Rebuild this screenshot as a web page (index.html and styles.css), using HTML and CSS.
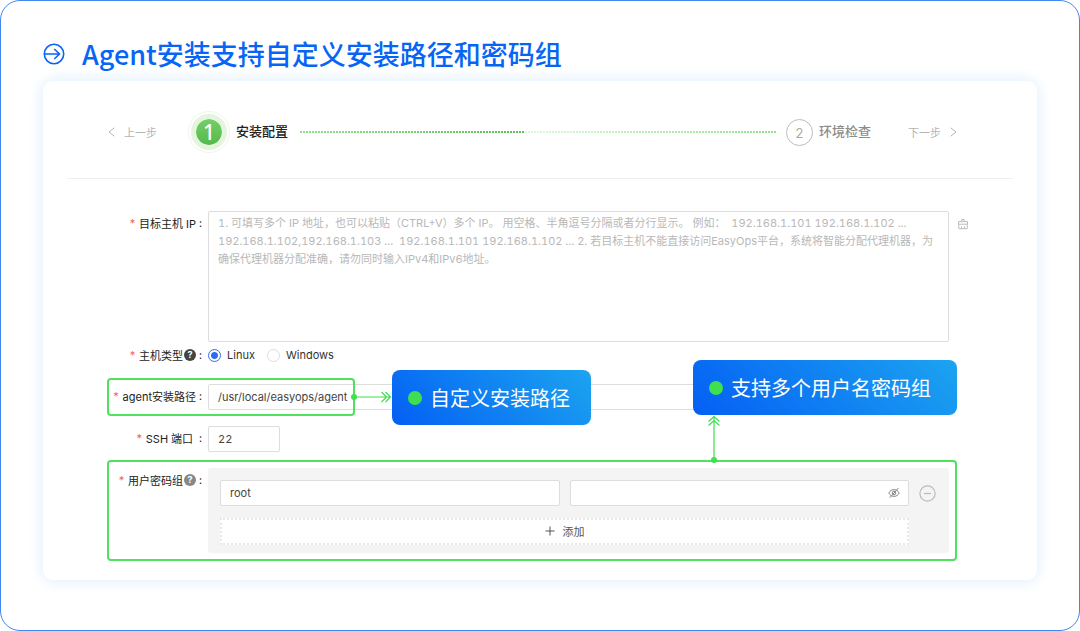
FILE: index.html
```html
<!DOCTYPE html>
<html lang="zh-CN">
<head>
  <meta charset="UTF-8" />
  <meta name="viewport" content="width=device-width, initial-scale=1.0"/>
  <title>Agent安装支持自定义安装路径和密码组</title>
  <link rel="stylesheet" href="styles.css">
</head>
<body>

  <div class="page">
    <header class="page-header">
      <svg class="title-icon" viewBox="0 0 22 22" fill="none" stroke="currentColor" stroke-width="1.6">
        <circle cx="11" cy="11" r="9.7"/>
        <path d="M1 11h15.5M11.3 6l5.2 5-5.2 5"/>
      </svg>
      <h1>Agent安装支持自定义安装路径和密码组</h1>
    </header>

    <main class="card">
      <!-- Steps -->
      <nav class="steps">
        <button type="button" class="step-nav">
          <svg viewBox="0 0 7 10" fill="none" stroke="currentColor"><path d="M6.3 .8L1 5l5.3 4.2"/></svg>
          上一步
        </button>
        <div class="step active">
          <span class="badge"><span>1</span></span>
          <span class="step-title">安装配置</span>
        </div>
        <div class="step-line"></div>
        <div class="step">
          <span class="number">2</span>
          <span class="step-title">环境检查</span>
        </div>
        <button type="button" class="step-nav">
          下一步
          <svg viewBox="0 0 7 10" fill="none" stroke="currentColor"><path d="M.7 .8L6 5 .7 9.2"/></svg>
        </button>
      </nav>

      <form class="form">
        <div class="row">
          <label class="label" for="hosts"><i>*</i>目标主机 IP<b>:</b></label>
          <div class="field">
            <textarea id="hosts" placeholder="1. 可填写多个 IP 地址，也可以粘贴（CTRL+V）多个 IP。 用空格、半角逗号分隔或者分行显示。 例如：  192.168.1.101 192.168.1.102 ...&#10;192.168.1.102,192.168.1.103 ...  192.168.1.101 192.168.1.102 ... 2. 若目标主机不能直接访问EasyOps平台，系统将智能分配代理机器，为&#10;确保代理机器分配准确，请勿同时输入IPv4和IPv6地址。"></textarea>
            <button type="button" class="clear-btn" aria-label="清空">
              <svg viewBox="0 0 12 12" fill="none" stroke="currentColor">
                <path d="M4.800 3.600V1.500h2.400v2.100M1.500 6.200V3.600h9v2.600zM1.800 6.200v4.500h8.400V6.200M4.500 10.700V8.300M7.500 10.700V8.300"/>
              </svg>
            </button>
          </div>
        </div>

        <div class="row" role="radiogroup" aria-labelledby="host-type">
          <span class="label" id="host-type"><i>*</i>主机类型<span class="help">?</span><b>:</b></span>
          <div class="field radios">
            <label><input type="radio" name="type" checked> Linux</label>
            <label><input type="radio" name="type"> Windows</label>
          </div>
        </div>

        <div class="row spaced">
          <label class="label" for="path"><i>*</i>agent安装路径<b>:</b></label>
          <div class="field">
            <input type="text" id="path" value="/usr/local/easyops/agent">
          </div>
          <div class="highlight"></div>
          <div class="callout callout-path">
            <svg class="arrow-right" viewBox="0 0 42 14" fill="none" stroke="currentColor" stroke-width="1.2">
              <circle cx="4" cy="7" r="3" fill="currentColor" stroke="none"/>
              <path d="M4 7h37M31.500 2l5 5-5 5M35.500 2l5 5-5 5"/>
            </svg>
            自定义安装路径
          </div>
        </div>

        <div class="row spaced">
          <label class="label" for="port"><i>*</i>SSH 端口<b class="wide">:</b></label>
          <div class="field">
            <input type="text" id="port" class="port" value="22">
          </div>
        </div>

        <div class="row group">
          <span class="label"><i>*</i>用户密码组<span class="help light">?</span><b>:</b></span>
          <div class="field accounts">
            <div class="account">
              <input type="text" value="root" aria-label="用户名">
              <div class="password">
                <input type="password" aria-label="密码">
                <svg viewBox="0 0 12 12" fill="none" stroke="currentColor">
                  <path d="M.8 6C2 3.800 3.800 2.600 6 2.600S10 3.800 11.200 6C10 8.200 8.200 9.400 6 9.400S2 8.200 .8 6zM1.800 10.800L10.400 1"/>
                  <circle cx="6" cy="6" r="1.800"/>
                </svg>
              </div>
              <button type="button" class="remove-btn" aria-label="删除">
                <svg viewBox="0 0 17 17" fill="none" stroke="currentColor" stroke-width="1.2"><circle cx="8.500" cy="8.500" r="7.600"/><path d="M5 8.500h7"/></svg>
              </button>
            </div>
            <button type="button" class="add-btn">
              <svg viewBox="0 0 10 10" fill="none" stroke="currentColor"><path d="M5 .5v9M.5 5h9"/></svg>
              添加
            </button>
          </div>
          <div class="callout callout-group">
            <svg class="arrow-up" viewBox="0 0 14 49" fill="none" stroke="currentColor" stroke-width="1.2">
              <circle cx="7" cy="45" r="3" fill="currentColor" stroke="none"/>
              <path d="M7 45V1.500M1.500 6.500L7 1.500l5.500 5M1.500 10.500L7 5.500l5.500 5"/>
            </svg>
            支持多个用户名密码组
          </div>
        </div>
      </form>
    </main>
  </div>

</body>
</html>
```
FILE: styles.css
```css
* { box-sizing: border-box; }

body {
  margin: 0;
  background: white;
  color: #333;
  font-family: Inter, 'Noto Sans CJK SC', sans-serif;
  font-size: 11px;
  font-variant-numeric: tabular-nums;
}

button, input, textarea {
  font: inherit;
  font-variant-numeric: tabular-nums;
  color: inherit;
}

button {
  padding: 0;
  border: none;
  background: none;
  cursor: pointer;
}

svg { display: block; }

.page {
  min-height: 100vh;
  padding: 35px 42px;
  border: 1px solid #4187f2;
  border-radius: 20px;
}

.page-header {
  display: flex;
  align-items: center;
  gap: 17px;
  color: #0765f6;
}

.page-header h1 {
  margin: 0;
  font-family: 'Noto Sans CJK SC', sans-serif;
  font-size: 27px;
  font-weight: 500;
  line-height: 36px;
}

.title-icon {
  width: 22px;
  height: 22px;
}

.card {
  margin-top: 9px;
  padding: 0 24px 19px;
  border-radius: 10px;
  background: white;
  box-shadow: 0 0 16px #d9ebfd;
}

/* Steps */
.steps {
  display: flex;
  align-items: center;
  padding: 30px 56px 25px 41px;
  border-bottom: 1px solid #eee;
}

.step-nav {
  display: flex;
  align-items: center;
  gap: 9px;
  color: #b4b4b4;
}

.step-nav svg {
  width: 7px;
  height: 10px;
}

.step {
  display: flex;
  align-items: center;
  gap: 6px;
  color: #8c8c8c;
}

.step.active {
  margin-left: 31px;
  color: #222;
}

.step:not(.active) { margin-right: 37px; }

.step-title {
  padding-bottom: 3px;
  font-size: 13px;
  font-weight: 500;
}

.badge {
  display: grid;
  place-items: center;
  width: 42px;
  height: 42px;
  border: 1px solid #eef7ea;
  border-radius: 50%;
}

.badge span {
  width: 36px;
  height: 36px;
  border: 5px solid #e4f4dd;
  border-radius: 50%;
  background: linear-gradient(#74cf68, #54b94c) padding-box;
  color: white;
  font-family: 'Noto Sans', sans-serif;
  font-size: 21px;
  font-weight: 500;
  line-height: 26px;
  text-align: center;
}

.number {
  width: 27px;
  height: 27px;
  border: 1px solid #bbb;
  border-radius: 50%;
  color: #aaa;
  font-size: 13px;
  line-height: 26px;
  text-align: center;
}

.step-line {
  flex: 1;
  height: 2px;
  margin: 0 9px 0 12px;
  background: linear-gradient(90deg, #8fe289, #5cc353 47%, #def9de 47%, #8fe289);
  mask-image: repeating-linear-gradient(90deg, #000 0 2px, transparent 2px 3px);
}

/* Form */
.form { padding: 32px 56px 0 40px; }

.row {
  position: relative;
  display: flex;
  gap: 6px;
  padding-right: 8px;
}

.row.spaced { margin-bottom: 16px; }

.label {
  display: flex;
  flex: none;
  align-items: center;
  justify-content: flex-end;
  width: 95px;
  height: 24px;
  color: #222;
  white-space: pre;
}

.label i {
  margin-right: 3px;
  color: #f0625d;
  font-style: normal;
}

.label b {
  margin-left: 3px;
  font-weight: 400;
}

.label .wide { margin-left: 6px; }

.help {
  width: 12px;
  height: 12px;
  margin-left: 1px;
  border-radius: 50%;
  background: #444;
  color: white;
  font-size: 9px;
  font-weight: 700;
  line-height: 12px;
  text-align: center;
}

.help.light { background: #888; }

.field {
  position: relative;
  flex: 1;
  min-width: 0;
}

input[type="text"],
input[type="password"],
textarea {
  display: block;
  width: 100%;
  height: 26px;
  padding: 0 9px;
  border: 1px solid #ddd;
  border-radius: 2px;
  background: white;
  color: #444;
  outline: none;
}

textarea {
  height: 131px;
  padding: 2px 9px;
  line-height: 18px;
  resize: none;
}

textarea::placeholder { color: #b8b8b8; }

.clear-btn {
  position: absolute;
  top: 7px;
  left: calc(100% + 8px);
  color: #bbb;
}

.clear-btn svg {
  width: 12px;
  height: 12px;
}

.radios {
  display: flex;
  align-items: center;
  gap: 12px;
  margin-bottom: 16px;
  height: 26px;
}

.radios label {
  display: flex;
  align-items: center;
  gap: 6px;
}

.row[role="radiogroup"] .label { height: 26px; }

.radios input {
  width: 13px;
  height: 13px;
  margin: 0;
  border: 1px solid #ddd;
  border-radius: 50%;
  appearance: none;
}

.radios input:checked {
  border-color: #2f6bf0;
  background: radial-gradient(#2f6bf0 0 3px, white 4px);
}

input#path { background: none; }

input.port { width: 72px; }

/* Highlighted areas */
.highlight {
  position: absolute;
  top: -6px;
  left: 0;
  width: 248px;
  height: 38px;
  border: 2px solid #4ee25e;
  border-radius: 4px;
  pointer-events: none;
}

.group {
  margin-top: -8px;
  padding: 6px;
  padding-left: 0;
  border: 2px solid #4ee25e;
  border-radius: 4px;
}

.group .label { width: 93px; }

.accounts {
  padding: 12px 40px 8px 12px;
  border-radius: 3px;
  background: #f4f4f4;
}

.account {
  position: relative;
  display: grid;
  grid-template-columns: 1fr 1fr;
  gap: 10px;
}

.password { position: relative; }

.password svg {
  position: absolute;
  top: 7px;
  right: 9px;
  width: 12px;
  height: 12px;
  color: #888;
}

.remove-btn {
  position: absolute;
  top: 5px;
  left: calc(100% + 10px);
  color: #bbb;
}

.remove-btn svg {
  width: 17px;
  height: 17px;
}

.add-btn {
  display: flex;
  align-items: center;
  justify-content: center;
  gap: 8px;
  width: 100%;
  height: 27px;
  margin-top: 12px;
  padding-bottom: 1px;
  border: 2px dotted #e8e8e8;
  background: white;
  color: #555;
}

.add-btn svg {
  width: 10px;
  height: 10px;
}

/* Callouts */
.callout {
  position: absolute;
  display: flex;
  align-items: center;
  gap: 8px;
  height: 55px;
  padding: 0 21px 0 16px;
  border-radius: 8px;
  background: linear-gradient(45deg, #045ff4, #1ca4f0);
  color: white;
  font-size: 20px;
  white-space: nowrap;
}

.callout::before {
  content: '';
  width: 14px;
  height: 14px;
  border-radius: 50%;
  background: #3ee04f;
}

.callout svg {
  position: absolute;
  color: #3ee04f;
}

.callout-path {
  top: -14px;
  left: 285px;
}

.callout-group {
  right: -2px;
  bottom: calc(100% + 47px);
  padding-right: 26px;
}

.arrow-right {
  top: 20px;
  right: 100%;
  width: 42px;
  height: 14px;
}

.arrow-up {
  top: 100%;
  left: 14px;
  width: 14px;
  height: 49px;
}
```
